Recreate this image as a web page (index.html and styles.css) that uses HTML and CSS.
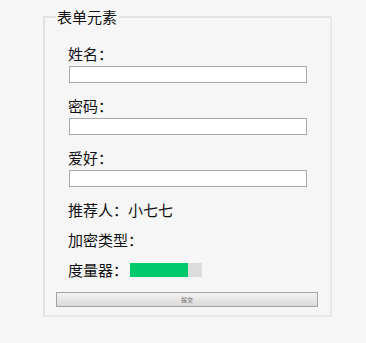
FILE: index.html
```html
<!DOCTYPE html>
<html lang="zh">
<head>
<meta charset="utf-8">
<title>表单元素</title>
<link rel="stylesheet" href="styles.css">
</head>
<body>
<form class="form">
  <fieldset class="box">
    <legend class="legend">表单元素</legend>
    <div class="field">
      <label class="label">姓名：</label>
      <input class="input" type="text">
    </div>
    <div class="field">
      <label class="label">密码：</label>
      <input class="input" type="password">
    </div>
    <div class="field">
      <label class="label">爱好：</label>
      <input class="input" type="text">
    </div>
    <div class="line">推荐人：小七七</div>
    <div class="line">加密类型：</div>
    <div class="line meter-line">
      <span>度量器：</span>
      <span class="meter"><span class="meter-fill" style="width:80%"></span></span>
    </div>
    <button class="submit" type="button">提交</button>
  </fieldset>
</form>
</body>
</html>
```
FILE: styles.css
```css
html, body {
  margin: 0;
  padding: 0;
  background: #f6f6f6;
}
body {
  font-family: "Noto Sans CJK SC", "Noto Sans", sans-serif;
  font-size: 15px;
  line-height: 20px;
  color: #111;
}
.form {
  margin: 0;
  padding: 7px 0 0 43px;
}
.box {
  margin: 0;
  width: 262px;
  box-sizing: content-box;
  padding: 0 12px 8px 11px;
  border: 2px solid;
  border-color: #e2e2e2 #e8e8e8 #e8e8e8 #e2e2e2;
  min-width: 0;
}
.legend {
  padding: 0 2px 0 1px;
  font-size: 15px;
  line-height: 20px;
}
.field {
  padding-left: 12px;
  margin-bottom: 13px;
}
.field:first-of-type {
  margin-top: 17px;
}
.label {
  display: block;
  margin-bottom: 2px;
}
.input {
  display: block;
  box-sizing: border-box;
  width: 238px;
  height: 17px;
  margin: 0 0 0 1px;
  padding: 0 2px;
  border: 1px solid #aaaaaa;
  background: #fff;
  font-size: 12px;
}
.line {
  padding-left: 12px;
  margin-bottom: 10px;
}
.meter-line {
  display: flex;
  align-items: center;
  margin-bottom: 12px;
}
.meter {
  display: block;
  width: 72px;
  height: 14px;
  margin-left: 2px;
  background: #dcdcdc;
}
.meter-fill {
  display: block;
  height: 100%;
  background: #00c96c;
}
.submit {
  display: block;
  width: 262px;
  height: 15px;
  margin: 0;
  padding: 0;
  border: 1px solid #a3a3a3;
  background: linear-gradient(#f3f3f3, #dadada);
  font-family: "Noto Sans CJK SC", sans-serif;
  font-size: 6px;
  line-height: 13px;
  color: #666;
}
```
